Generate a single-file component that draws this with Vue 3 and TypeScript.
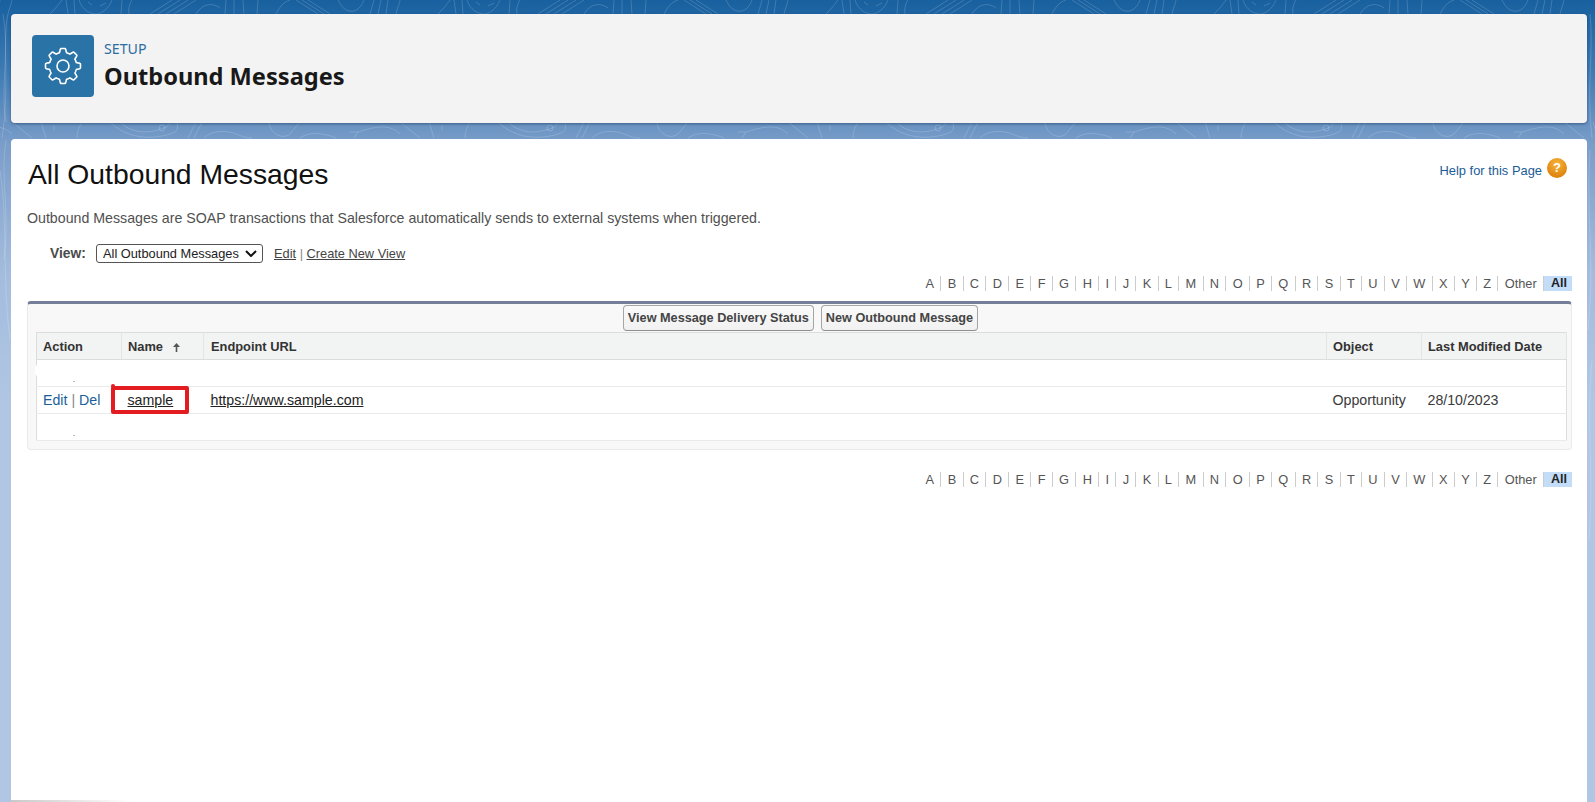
<script setup lang="ts">
const letters = 'ABCDEFGHIJKLMNOPQRSTUVWXYZ'.split('').concat('Other')

function gearPath(cx: number, cy: number): string {
  const pts: string[] = []
  const n = 240
  for (let i = 0; i < n; i++) {
    const t = (i / n) * Math.PI * 2
    const wave = Math.cos(8 * t)
    const s = Math.max(-1, Math.min(1, wave * 2.2))
    const r = 15.6 + 1.9 * s
    const x = cx + r * Math.sin(t)
    const y = cy - r * Math.cos(t)
    pts.push((i === 0 ? 'M' : 'L') + x.toFixed(2) + ' ' + y.toFixed(2))
  }
  return pts.join(' ') + ' Z'
}
const gear = gearPath(31, 31)

const tile = [
  'M38 14 C44 8 47 4 50 0', 'M56 14 L54 0', 'M63 14 L62 0',
  'M67 0 C70 10 78 14 84 14 S97 8 100 0', 'M76 2 L80 5', 'M88 6 L94 3',
  'M109 14 L110 0', 'M117 14 C116 8 118 3 120 0',
  'M138 14 L160 0', 'M146 14 L168 0', 'M154 14 L176 0', 'M162 14 L184 0',
  'M184 14 C190 4 200 2 208 8', 'M213 14 L214 0', 'M222 14 L222 0', 'M232 14 L231 0', 'M245 14 L246 0',
  'M264 14 C268 6 272 2 278 0', 'M284 0 L306 14', 'M290 0 L312 14', 'M296 0 L318 14',
  'M326 0 C332 14 346 16 352 0', 'M358 14 L362 0', 'M366 14 L369 0', 'M374 14 L376 0',
  'M384 14 C386 6 388 2 388 0',
  'M0 122 L20 138', 'M29 122 L34 138', 'M42 125 L42 131', 'M65 138 C65 130 68 125 71 122',
  'M98 122 C110 134 128 140 150 136 S164 126 165 122', 'M108 122 C118 132 132 134 146 130 S156 124 158 122',
  'M147 128 a3 3 0 1 0 6 0 a3 3 0 1 0 -6 0',
  'M176 138 L184 122', 'M182 138 L190 122',
  'M192 138 C200 130 214 130 224 134 S236 138 240 138',
  'M257 122 C258 134 270 140 278 134 L288 122',
  'M288 138 C296 132 310 132 324 138',
  'M338 132 L346 132 L342 138', 'M346 132 C360 128 376 122 388 134'
]
const offsets = [-388, 0, 388, 776, 1164, 1552].map(n => n + 12)
const side = [
  'M3 14 C10 50 0 90 6 122', 'M8 14 C2 40 10 90 2 138', 'M0 170 C8 220 2 280 10 340', 'M6 140 C0 180 10 210 4 260',
  'M1590 14 C1594 50 1586 90 1592 138', 'M1590 150 C1586 220 1595 260 1588 330', 'M1592 360 C1586 420 1594 470 1589 540'
]
</script>

<template>
  <div class="page">
    <svg class="contours" width="1595" height="802" viewBox="0 0 1595 802" aria-hidden="true">
      <g v-for="o in offsets" :key="o" :transform="`translate(${o} 0)`">
        <path v-for="(d, i) in tile" :key="i" :d="d" />
      </g>
      <path v-for="(d, i) in side" :key="'s' + i" :d="d" />
    </svg>

    <header class="head-card">
      <div class="head-icon">
        <svg width="62" height="62" viewBox="0 0 62 62" fill="none" stroke="#fff">
          <path :d="gear" stroke-width="1.6" stroke-linejoin="round" />
          <circle cx="31" cy="31" r="6" stroke-width="1.6" />
        </svg>
      </div>
      <div class="head-text">
        <div class="eyebrow">SETUP</div>
        <h1 class="head-title">Outbound Messages</h1>
      </div>
    </header>

    <main class="body-card">
      <div class="title-row">
        <h2 class="page-title">All Outbound Messages</h2>
        <div class="help">
          <a class="help-link">Help for this Page</a>
          <span class="help-icon">?</span>
        </div>
      </div>
      <p class="intro">Outbound Messages are SOAP transactions that Salesforce automatically sends to external systems when triggered.</p>

      <div class="view-row">
        <label class="view-label">View:</label>
        <span class="select-wrap">
          <select class="view-select">
            <option>All Outbound Messages</option>
          </select>
          <svg class="chevron" width="12" height="7" viewBox="0 0 12 7" fill="none" stroke="#111" stroke-width="2">
            <path d="M1 1 L6 6 L11 1" />
          </svg>
        </span>
        <span class="view-links"><a class="u">Edit</a> <span class="sep">|</span> <a class="u">Create New View</a></span>
      </div>

      <div class="alpha alpha-top">
        <a v-for="l in letters" :key="l" class="alpha-item">{{ l }}</a>
        <a class="alpha-all">All</a>
      </div>

      <section class="panel">
        <div class="btn-row">
          <button class="btn">View Message Delivery Status</button>
          <button class="btn">New Outbound Message</button>
        </div>
        <table class="list">
          <colgroup>
            <col class="c1" /><col class="c2" /><col class="c3" /><col class="c4" /><col class="c5" />
          </colgroup>
          <thead>
            <tr>
              <th>Action</th>
              <th>Name
                <svg class="arrow" width="7" height="9" viewBox="0 0 7 9" fill="#555">
                  <path d="M3.5 0 L7 4 L4.3 4 L4.3 9 L2.7 9 L2.7 4 L0 4 Z" />
                </svg>
              </th>
              <th>Endpoint URL</th>
              <th>Object</th>
              <th>Last Modified Date</th>
            </tr>
          </thead>
          <tbody>
            <tr>
              <td class="dot-cell"><span class="blot"></span><span class="dot"></span></td><td></td><td></td><td></td><td></td>
            </tr>
            <tr>
              <td><a class="blue">Edit</a> <span class="sep">|</span> <a class="blue">Del</a></td>
              <td class="name-cell">
                <a class="u dark">sample</a>
                <span class="highlight"></span>
                <span class="highlight-tick"></span>
              </td>
              <td><a class="u dark">https://www.sample.com</a></td>
              <td>Opportunity</td>
              <td>28/10/2023</td>
            </tr>
            <tr>
              <td class="dot-cell"><span class="dot"></span></td><td></td><td></td><td></td><td></td>
            </tr>
          </tbody>
        </table>
      </section>

      <div class="alpha alpha-bottom">
        <a v-for="l in letters" :key="l" class="alpha-item">{{ l }}</a>
        <a class="alpha-all">All</a>
      </div>
      <span class="bottom-shade"></span>
    </main>
  </div>
</template>

<style>
html, body { margin: 0; height: 100%; overflow: hidden; }
</style>

<style scoped>
.page {
  position: relative;
  box-sizing: border-box;
  width: 1595px;
  height: 802px;
  overflow: hidden;
  padding: 14px 8px 0 11px;
  display: flex;
  flex-direction: column;
  gap: 16px;
  background: linear-gradient(180deg, #18609f 0%, #3f7bb4 9%, #7a9dc9 18%, #a3bcdd 34%, #b0c6e3 50%, #b0c6e3 100%);
  font-family: "Liberation Sans", Arial, sans-serif;
}
.contours { position: absolute; inset: 0; }
.contours path { fill: none; stroke: rgba(255, 255, 255, .17); stroke-width: 1; }

.head-card {
  position: relative;
  box-sizing: border-box;
  height: 109px;
  flex: none;
  display: flex;
  align-items: flex-start;
  gap: 10px;
  padding: 21px;
  background: #f3f3f3;
  border-radius: 4px;
  box-shadow: 0 1px 3px rgba(30, 50, 90, .55);
}
.head-icon {
  width: 62px;
  height: 62px;
  border-radius: 4px;
  background: #2a73a6;
}
.head-icon svg { display: block; }
.eyebrow {
  margin-top: 5px;
  font-family: "Noto Sans", sans-serif;
  font-size: 14.2px;
  line-height: 18px;
  color: #2d6d9f;
}
.head-title {
  margin: 3px 0 0;
  font-family: "Noto Sans", sans-serif;
  font-size: 23.6px;
  line-height: 30px;
  font-weight: 700;
  color: #181818;
}

.body-card {
  position: relative;
  box-sizing: border-box;
  flex: 1;
  padding: 0 15px 0 16px;
  background: #fff;
  border-radius: 4px 4px 0 0;
}
.bottom-shade {
  position: absolute;
  left: 0;
  bottom: 0;
  width: 120px;
  height: 2px;
  background: linear-gradient(90deg, #c9c9c9, #fff);
}
.title-row {
  display: flex;
  justify-content: space-between;
  align-items: flex-start;
  padding: 19px 0 0 1px;
  height: 33px;
}
.page-title {
  margin: 0;
  font-size: 28.3px;
  line-height: 32px;
  font-weight: 400;
  color: #111;
}
.help {
  display: flex;
  align-items: flex-start;
  gap: 5px;
  padding: 0 5px 0 0;
}
.help-link { font-size: 12.9px; line-height: 15px; color: #1a5c96; padding-top: 5px; }
.help-icon {
  width: 20px;
  height: 20px;
  border-radius: 50%;
  background: radial-gradient(circle at 50% 30%, #f6b53c, #de830f 75%);
  color: #fff;
  font-size: 13px;
  font-weight: 700;
  line-height: 20px;
  text-align: center;
}
.intro {
  margin: 19px 0 0;
  font-size: 14.2px;
  line-height: 16px;
  color: #505050;
}
.view-row {
  display: flex;
  align-items: center;
  height: 20px;
  margin-top: 17px;
  padding-left: 23px;
  font-size: 12.8px;
  color: #333;
}
.view-label { font-weight: 700; color: #4a4a4a; width: 46px; font-size: 13.8px; }
.select-wrap { position: relative; display: block; height: 19px; }
.view-select {
  display: block;
  box-sizing: border-box;
  width: 167px;
  height: 19px;
  padding: 0 0 0 6px;
  appearance: none;
  font-family: "Liberation Sans", Arial, sans-serif;
  font-size: 12.8px;
  color: #222;
  background: #fff;
  border: 1px solid #555;
  border-radius: 3px;
}
.chevron { position: absolute; right: 6px; top: 6px; pointer-events: none; }
.view-links { margin-left: 11px; color: #444; }
.u { text-decoration: underline; }
.sep { color: #888; }

.alpha {
  display: flex;
  justify-content: flex-end;
  align-items: center;
  height: 15px;
  font-size: 12.8px;
  color: #555;
}
.alpha-top { margin-top: 13px; }
.alpha-bottom { margin-top: 22px; }
.alpha-item {
  padding: 0 6.3px;
  line-height: 15px;
  border-right: 1px solid #ccc;
}
.alpha-item:last-of-type { border-right: 0; padding-right: 6px; }
.alpha-all {
  box-sizing: border-box;
  width: 28px;
  height: 15px;
  line-height: 15px;
  padding-left: 7px;
  font-size: 12.5px;
  font-weight: 700;
  color: #222;
  background: #c3dcf8;
}

.panel {
  box-sizing: border-box;
  height: 149px;
  margin-top: 10px;
  padding: 0 6px 0 8px;
  background: #f8f8f8;
  border: 1px solid #eaeaea;
  border-top: 3px solid #747e98;
  border-radius: 4px;
}
.btn-row {
  display: flex;
  justify-content: center;
  gap: 7px;
  height: 28px;
  padding: 1px 0 0;
  box-sizing: border-box;
}
.btn {
  box-sizing: border-box;
  height: 26px;
  padding: 0 4px;
  font-family: "Liberation Sans", Arial, sans-serif;
  font-size: 12.7px;
  font-weight: 700;
  color: #444;
  background: linear-gradient(#fafafa, #f1f1f1);
  border: 1px solid #a5a5a5;
  border-bottom-color: #8f8f8f;
  border-radius: 4px;
}
.list {
  width: 1530px;
  table-layout: fixed;
  border-collapse: collapse;
  background: #fff;
  border: 1px solid #dcdcdc;
  font-size: 14.2px;
  color: #3a3a3a;
}
.c1 { width: 85px; }
.c2 { width: 82px; }
.c3 { width: 1123px; }
.c4 { width: 95px; }
.c5 { width: 145px; }
.list th {
  height: 26px;
  padding: 0 6px;
  text-align: left;
  font-size: 12.85px;
  font-weight: 700;
  color: #333;
  background: #f2f3f3;
  border-bottom: 1px solid #dcdcdc;
  border-right: 1px solid #e3e5e5;
}
.list td {
  height: 26px;
  padding: 0 6px;
  border-bottom: 1px solid #e9ebeb;
}
.list th:nth-child(3), .list td:nth-child(3) { padding-left: 7px; }
.arrow { margin-left: 6px; vertical-align: -1px; }
.blue { color: #1b5f99; }
.dark { color: #222; }
.name-cell { position: relative; }
.highlight {
  position: absolute;
  left: -11px;
  top: -1px;
  width: 78px;
  height: 28px;
  box-sizing: border-box;
  border: 4px solid #e21c21;
  border-radius: 2px;
  pointer-events: none;
}
.highlight-tick {
  position: absolute;
  left: -11px;
  top: -3px;
  width: 4px;
  height: 4px;
  border-radius: 2px;
  background: #e21c21;
}
.dot-cell { position: relative; }
.dot {
  position: absolute;
  left: 36px;
  bottom: 4px;
  width: 2px;
  height: 1px;
  background: #b4bcc4;
}
.blot {
  position: absolute;
  left: -2px;
  top: 4px;
  width: 10px;
  height: 13px;
  border-radius: 5px;
  background: #fff;
}
</style>
